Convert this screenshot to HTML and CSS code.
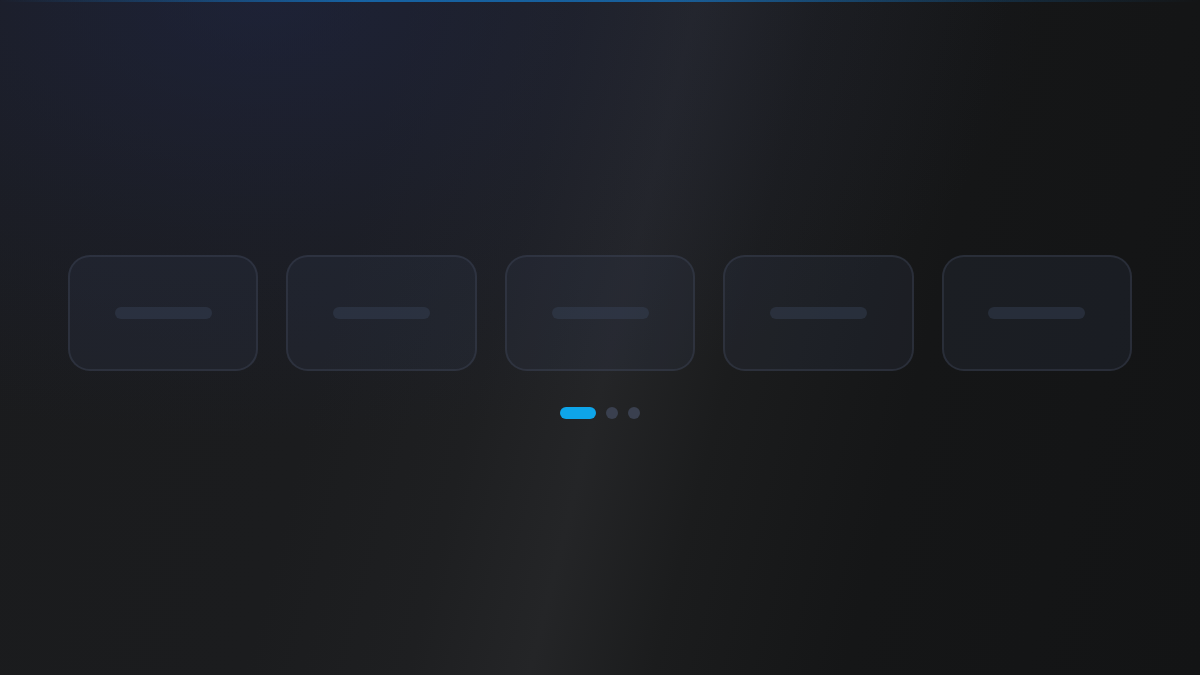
FILE: index.html
```html
<!DOCTYPE html>
<html lang="en">
<head>
<meta charset="utf-8">
<title>Loading</title>
<link rel="stylesheet" href="styles.css">
</head>
<body>
<div class="page">
  <div class="topline"></div>
  <main class="stage">
    <div class="cards">
      <div class="card"><span class="bar"></span></div>
      <div class="card"><span class="bar"></span></div>
      <div class="card"><span class="bar"></span></div>
      <div class="card"><span class="bar"></span></div>
      <div class="card"><span class="bar"></span></div>
    </div>
    <div class="dots">
      <span class="dot active"></span>
      <span class="dot"></span>
      <span class="dot"></span>
    </div>
  </main>
</div>
</body>
</html>
```

FILE: styles.css
```css
html, body {
  margin: 0;
  padding: 0;
  height: 100%;
  background: #141516;
  font-family: "Inter", "Liberation Sans", sans-serif;
}

.page {
  position: relative;
  width: 1200px;
  height: 675px;
  overflow: hidden;
  background:
    radial-gradient(ellipse 65% 65% at 22% 0%, rgba(32, 40, 78, 0.5) 0%, rgba(32, 40, 78, 0.18) 55%, rgba(32, 40, 78, 0) 100%),
    linear-gradient(104deg, #1a1b1d 0%, #1b1c1e 30%, #1e1f21 42%, #242527 51%, #1b1c1d 60%, #151617 74%, #131415 100%);
  display: flex;
  flex-direction: column;
}

.topline {
  position: absolute;
  top: 0;
  left: 0;
  right: 0;
  height: 2px;
  background: linear-gradient(90deg, rgba(14, 140, 220, 0) 0%, rgba(20, 120, 200, 0.75) 30%, rgba(20, 120, 200, 0.7) 55%, rgba(20, 110, 180, 0.3) 80%, rgba(20, 110, 180, 0) 100%);
}

.stage {
  flex: 1;
  display: flex;
  flex-direction: column;
  justify-content: center;
  align-items: center;
  gap: 36px;
  padding: 0 68px 1px;
}

.cards {
  display: flex;
  gap: 28px;
  width: 100%;
}

.card {
  flex: 1;
  height: 116px;
  box-sizing: border-box;
  border-radius: 22px;
  border: 2px solid rgba(70, 76, 96, 0.35);
  background: rgba(52, 58, 84, 0.22);
  display: flex;
  align-items: center;
  justify-content: center;
}

.bar {
  display: block;
  width: 97px;
  height: 12px;
  border-radius: 6px;
  background: rgba(58, 68, 90, 0.42);
}

.dots {
  display: flex;
  gap: 10px;
  align-items: center;
}

.dot {
  display: block;
  width: 12px;
  height: 12px;
  border-radius: 6px;
  background: #3a404f;
}

.dot.active {
  width: 36px;
  background: #0ea5e9;
}
```
